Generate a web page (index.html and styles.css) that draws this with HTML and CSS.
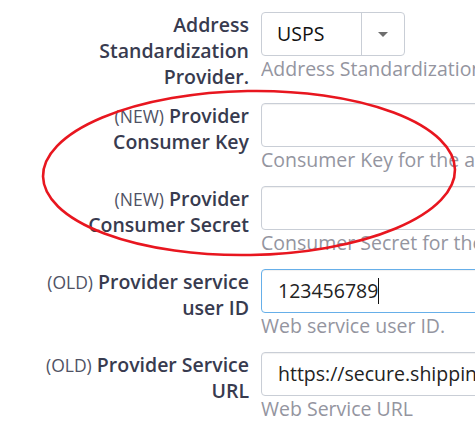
FILE: index.html
```html
<!DOCTYPE html>
<html>
<head>
<meta charset="utf-8">
<link rel="stylesheet" href="styles.css">
</head>
<body>
<div class="form">
  <div class="row">
    <div class="label">Address Standardization Provider.</div>
    <div class="control">
      <div class="select">
        <span class="select-value">USPS</span>
        <span class="select-btn"><span class="caret"></span></span>
      </div>
      <div class="help">Address Standardization</div>
    </div>
  </div>
  <div class="row">
    <div class="label"><span class="tag">(NEW)</span> Provider Consumer Key</div>
    <div class="control">
      <div class="input"></div>
      <div class="help">Consumer Key for the a</div>
    </div>
  </div>
  <div class="row">
    <div class="label"><span class="tag">(NEW)</span> Provider Consumer Secret</div>
    <div class="control">
      <div class="input"></div>
      <div class="help">Consumer Secret for the</div>
    </div>
  </div>
  <div class="row">
    <div class="label"><span class="tag">(OLD)</span> Provider service user ID</div>
    <div class="control">
      <div class="input focus">123456789<span class="cursor"></span></div>
      <div class="help">Web service user ID.</div>
    </div>
  </div>
  <div class="row">
    <div class="label"><span class="tag">(OLD)</span> Provider Service URL</div>
    <div class="control">
      <div class="input">https://secure.shippin</div>
      <div class="help">Web Service URL</div>
    </div>
  </div>
</div>
<svg class="circle" width="475" height="421" viewBox="0 0 475 421">
  <ellipse cx="249" cy="173" rx="206" ry="82" fill="none" stroke="#e8161f" stroke-width="2.6" transform="rotate(-1 249 173)"/>
</svg>
</body>
</html>
```
FILE: styles.css
```css
html, body {
  margin: 0;
  padding: 0;
  background: #fff;
  overflow: hidden;
}
body {
  width: 475px;
  height: 421px;
  font-family: "Open Sans", "Liberation Sans", sans-serif;
  font-size: 19.5px;
  line-height: 26px;
  position: relative;
}
.form {
  padding-top: 12px;
  display: flex;
  flex-direction: column;
  gap: 13px;
}
.row {
  display: flex;
  gap: 12px;
  align-items: flex-start;
  padding-left: 39px;
}
.label {
  width: 210px;
  flex: none;
  text-align: right;
  font-weight: 600;
  color: #383b4f;
}
.tag {
  font-weight: 400;
  font-size: 17.5px;
  color: #4f5264;
}
.control {
  flex: none;
  width: 214px;
  overflow: hidden;
}
.select {
  display: flex;
  width: 144px;
  height: 44px;
  box-sizing: border-box;
  border: 1px solid #c9ced6;
  border-radius: 4px;
  background: #fff;
}
.select-value {
  flex: 1;
  padding-left: 15px;
  line-height: 42px;
  color: #111;
  border-right: 1px solid #c9ced6;
}
.select-btn {
  width: 42px;
  display: flex;
  align-items: center;
  justify-content: center;
}
.caret {
  width: 0;
  height: 0;
  border-left: 5px solid transparent;
  border-right: 5px solid transparent;
  border-top: 5px solid #6e6e6e;
}
.input {
  width: 240px;
  height: 44px;
  box-sizing: border-box;
  border: 1px solid #c9ced6;
  border-radius: 4px;
  box-shadow: inset 0 1px 1px rgba(0,0,0,0.06);
  padding-left: 16px;
  line-height: 42px;
  color: #222;
  white-space: nowrap;
  overflow: hidden;
}
.input.focus {
  border-color: #66afe9;
}
.cursor {
  display: inline-block;
  width: 1px;
  height: 26px;
  background: #111;
  vertical-align: middle;
  margin-top: -3px;
}
.help {
  color: #94959f;
  white-space: nowrap;
  margin-top: 0;
}
.circle {
  position: absolute;
  left: 0;
  top: 0;
  pointer-events: none;
}
```
